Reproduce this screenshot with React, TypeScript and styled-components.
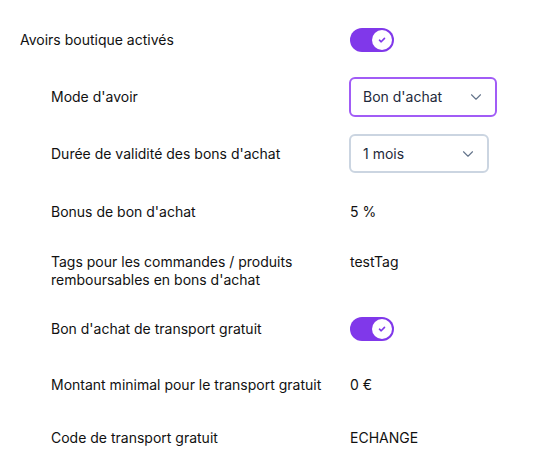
import React from "react";
import styled, { createGlobalStyle } from "styled-components";
import { ChevronDown } from "lucide-react";

const GlobalStyle = createGlobalStyle`
  html, body {
    margin: 0;
    padding: 0;
    background: #ffffff;
  }
  body {
    font-family: Inter, "Noto Sans", sans-serif;
    color: #111111;
    -webkit-font-smoothing: antialiased;
  }
`;

const Form = styled.div`
  display: flex;
  flex-direction: column;
  padding: 12px 20px 0;
`;

const Row = styled.div<{ $h: number }>`
  display: grid;
  grid-template-columns: 330px 1fr;
  align-items: center;
  height: ${(p) => p.$h}px;
`;

const Label = styled.div<{ $indent?: boolean }>`
  padding-left: ${(p) => (p.$indent ? 31 : 0)}px;
  padding-right: 4px;
  font-size: 14px;
  line-height: 17.5px;
  color: #111111;
`;

const Value = styled.div<{ $top?: boolean }>`
  font-size: 14px;
  line-height: 17.5px;
  color: #111111;
  align-self: ${(p) => (p.$top ? "start" : "center")};
  margin-top: ${(p) => (p.$top ? 12 : 0)}px;
`;

const Track = styled.span`
  display: inline-flex;
  align-items: center;
  justify-content: flex-end;
  box-sizing: border-box;
  width: 44px;
  height: 24px;
  padding: 2px;
  border-radius: 12px;
  background: #8038ea;
  vertical-align: middle;
`;

const Knob = styled.span`
  display: flex;
  align-items: center;
  justify-content: center;
  width: 20px;
  height: 20px;
  border-radius: 50%;
  background: #ffffff;
`;

const Select = styled.div<{ $focused?: boolean; $w: number; $h: number }>`
  display: flex;
  align-items: center;
  justify-content: space-between;
  box-sizing: border-box;
  width: ${(p) => p.$w}px;
  height: ${(p) => p.$h}px;
  margin-left: -1px;
  padding: 0 10px 0 12px;
  border: 2px solid ${(p) => (p.$focused ? "#a15cf6" : "#cbd5e1")};
  border-radius: 6px;
  font-size: 14px;
  color: #1e293b;
  background: #ffffff;

  svg {
    color: #64748b;
  }
`;

const Toggle = () => (
  <Track>
    <Knob>
      <svg width="10" height="10" viewBox="0 0 10 10" fill="none">
        <path
          d="M2.5 5.2 4.2 6.8 7.5 3.4"
          stroke="#8038ea"
          strokeWidth="1.6"
          strokeLinecap="round"
          strokeLinejoin="round"
        />
      </svg>
    </Knob>
  </Track>
);

export default function App() {
  return (
    <>
      <GlobalStyle />
      <Form>
        <Row $h={56}>
          <Label>Avoirs boutique activés</Label>
          <Value>
            <Toggle />
          </Value>
        </Row>
        <Row $h={57}>
          <Label $indent>Mode d'avoir</Label>
          <Value>
            <Select $focused $w={148} $h={40}>
              <span>Bon d'achat</span>
              <ChevronDown size={18} strokeWidth={1.5} />
            </Select>
          </Value>
        </Row>
        <Row $h={57}>
          <Label $indent>Durée de validité des bons d'achat</Label>
          <Value>
            <Select $w={140} $h={39}>
              <span>1 mois</span>
              <ChevronDown size={18} strokeWidth={1.5} />
            </Select>
          </Value>
        </Row>
        <Row $h={59}>
          <Label $indent>Bonus de bon d'achat</Label>
          <Value>5 %</Value>
        </Row>
        <Row $h={59}>
          <Label $indent>
            Tags pour les commandes / produits remboursables en bons d'achat
          </Label>
          <Value $top>testTag</Value>
        </Row>
        <Row $h={57}>
          <Label $indent>Bon d'achat de transport gratuit</Label>
          <Value>
            <Toggle />
          </Value>
        </Row>
        <Row $h={55}>
          <Label $indent>Montant minimal pour le transport gratuit</Label>
          <Value>0 €</Value>
        </Row>
        <Row $h={51}>
          <Label $indent>Code de transport gratuit</Label>
          <Value>ECHANGE</Value>
        </Row>
      </Form>
    </>
  );
}
